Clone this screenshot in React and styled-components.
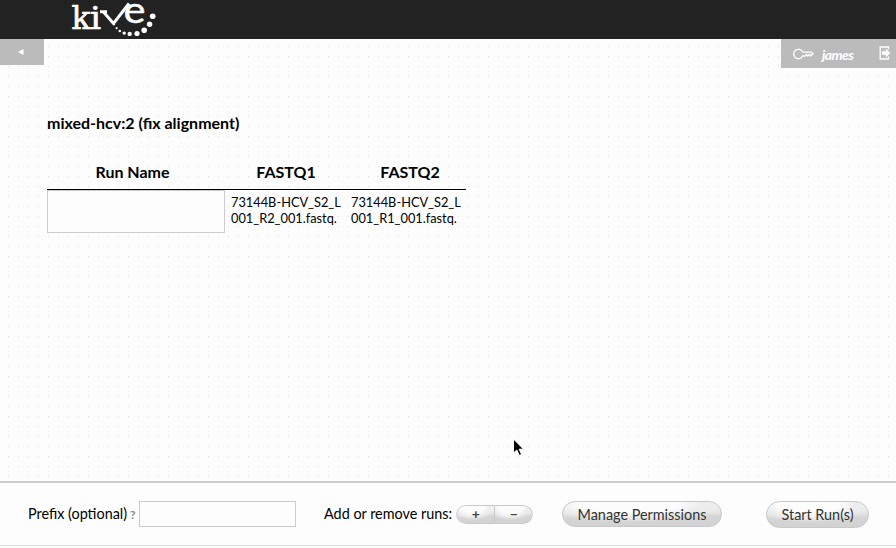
import React from 'react';
import styled, { createGlobalStyle, css } from 'styled-components';

const Global = createGlobalStyle`
  * { box-sizing: border-box; }
  body {
    margin: 0;
    overflow: hidden;
    background: #fdfdfd;
    color: #000;
    font: 14.4px/18px Lato, sans-serif;
  }
`;

const Page = styled.div`
  display: flex;
  flex-direction: column;
  height: 548px;
  background: conic-gradient(from 270deg at 1px 1px, #dedede 90deg, transparent 0) 8px 6px / 10px 10px #fdfdfd;
`;

const Header = styled.header`
  height: 39px;
  padding-left: 70px;
  background: #222;
`;

const Logo = styled.svg`
  display: block;
  overflow: visible;
  fill: #fff;
`;

const TopTabs = styled.nav`
  display: flex;
  justify-content: space-between;
  align-items: flex-start;
  height: 74px;
`;

const BackTab = styled.button`
  width: 44px;
  height: 26px;
  padding: 0 0 0 18px;
  border: 0;
  background: #bbb;
  svg { display: block; }
`;

const UserTab = styled.div`
  display: flex;
  align-items: center;
  width: 115px;
  height: 29px;
  padding-left: 12px;
  background: #bbb;
  color: #fff;
`;

const UserName = styled.span`
  width: 57px;
  margin-left: 8px;
  padding-top: 2px;
  font-size: 14px;
  font-weight: 700;
  font-style: italic;
  line-height: 27px;
  letter-spacing: -0.6px;
`;

const ExitIcon = styled.svg`
  margin-bottom: 2px;
`;

const Main = styled.main`
  flex: 1;
  padding-left: 47px;
`;

const Title = styled.h1`
  margin: 0;
  font-size: 16px;
  line-height: 20px;
`;

const RunTable = styled.div`
  display: grid;
  grid-template-columns: 178px 120px 121px;
  width: 419px;
  margin-top: 28px;
`;

const HeadCell = styled.div`
  height: 29px;
  padding-left: ${p => p.$left || 0}px;
  padding-right: ${p => p.$right || 0}px;
  border-bottom: 1px solid #000;
  text-align: center;
  font-size: 16px;
  font-weight: 700;
  line-height: 21px;
`;

const FileCell = styled.div`
  padding: 4px 0 0 6px;
  font-size: 12.8px;
  line-height: 16px;
  white-space: pre;
`;

const Field = styled.input`
  width: ${p => p.$w}px;
  height: ${p => p.$h}px;
  border: 1px solid #ccc;
  background: #fdfdfd;
  outline: 0;
`;

const Footer = styled.footer`
  display: flex;
  align-items: center;
  height: 65px;
  padding-left: 28px;
  border-top: 2px solid #ccc;
  border-bottom: 1px solid #ddd;
  background: #fdfdfd;
  margin-bottom: 2px;
  box-shadow: 0 2px #fdfdfd;
`;

const Label = styled.label`
  width: ${p => p.$w}px;
  white-space: nowrap;
`;

const Help = styled.span`
  width: 9px;
  color: #888;
  font-size: 12px;
  font-weight: 700;
  padding-top: 1px;
`;

const glossy = css`
  border: 1px solid #c9c9c9;
  background: radial-gradient(ellipse 62% 75% at 42% 8%, #fcfcfc 0 50%, #ececec 75%, transparent 100%),
    linear-gradient(#f7f7f7 0, #e8e8e8 40%, #d6d6d6 60%, #d2d2d2);
`;

const Button = styled.button`
  ${glossy}
  width: ${p => p.$w}px;
  height: ${p => p.$h}px;
  margin-left: ${p => p.$gap}px;
  margin-top: ${p => p.$drop || 0}px;
  padding: ${p => (p.$drop ? 0 : 2)}px 0 0;
  border-color: #c8c8c8;
  border-radius: 14px;
  color: #333;
  font: 14.4px/18px Lato, sans-serif;
`;

const Stepper = styled.div`
  display: flex;
  width: 77px;
  height: 19px;
  border-radius: 10px;
  overflow: hidden;
`;

const Step = styled.button`
  ${glossy}
  flex: ${p => (p.$last ? 38 : 39)};
  display: flex;
  align-items: center;
  justify-content: center;
  padding: 0 0 1px;
  border-radius: ${p => (p.$last ? '0 10px 10px 0' : '10px 0 0 10px')};
  ${p => p.$last && 'border-left: 0;'}
  color: #444;
  font: 700 14px/16px Lato, sans-serif;
`;

const Gap = styled.div`
  width: 28px;
`;

const Pointer = styled.svg`
  position: absolute;
  left: 512px;
  top: 437px;
`;

const logoDots = [
  [44.3, 24.5, 0.8], [46.6, 28.2, 1.1], [49.8, 31, 1.3], [54.2, 33.1, 1.7],
  [59.7, 33.9, 2.2], [67, 33.5, 2.6], [74.2, 30.3, 2.8], [79.6, 24.3, 2.7], [82.7, 16.2, 2.8],
];

const files = ['73144B-HCV_S2_L\n001_R2_001.fastq.', '73144B-HCV_S2_L\n001_R1_001.fastq.'];

function KiveLogo() {
  return (
    <Logo width="90" height="39" viewBox="0 0 90 39" aria-label="kive">
      <g fontFamily="DejaVu Serif" fontSize="32" stroke="#fff" strokeWidth="0.7">
        <text x="1.5" y="28.5" textLength="19" lengthAdjust="spacingAndGlyphs">k</text>
        <text x="20" y="28.5" textLength="11" lengthAdjust="spacingAndGlyphs">i</text>
      </g>
      <path d="M30 11.8h7M33.5 12l10 11.5L59 3.5" fill="none" stroke="#fff" strokeWidth="3" />
      <text x="53.5" y="23.3" fontFamily="Lato" fontSize="37" stroke="#fff" strokeWidth="0.4" textLength="22" lengthAdjust="spacingAndGlyphs">e</text>
      {logoDots.map(([x, y, r]) => <circle key={x} cx={x} cy={y} r={r} />)}
    </Logo>
  );
}

export default function App() {
  return (
    <>
      <Global />
      <Page>
        <Header><KiveLogo /></Header>
        <TopTabs>
          <BackTab aria-label="Back">
            <svg width="6" height="6" viewBox="0 0 6 6"><path d="M0 3L5.5 0v6z" fill="#fff" /></svg>
          </BackTab>
          <UserTab>
            <svg width="21" height="12" viewBox="0 0 21 12" fill="none" stroke="#fff" strokeWidth="1.3">
              <path d="M9.7 4A4.7 4.7 0 1 0 9.7 8h2.6l1.2-1.6L14.8 8l1.4-1.6L17.5 8l2.5-2-1.6-1.9H9.5" />
            </svg>
            <UserName>james</UserName>
            <ExitIcon width="13" height="14" viewBox="0 0 13 14">
              <path d="M9.5 3.5V1H1.2v12h8.3v-2.5" fill="none" stroke="#fff" strokeWidth="1.3" />
              <path d="M3 5.2h3.8V2.4L11.4 7l-4.6 4.6V8.8H3z" fill="#fff" />
            </ExitIcon>
          </UserTab>
        </TopTabs>
        <Main>
          <Title>mixed-hcv:2 (fix alignment)</Title>
          <RunTable>
            <HeadCell $right={7}>Run Name</HeadCell>
            <HeadCell $left={2}>FASTQ1</HeadCell>
            <HeadCell $left={9}>FASTQ2</HeadCell>
            <Field $w={178} $h={43} aria-label="Run Name" />
            {files.map(f => <FileCell key={f}>{f}</FileCell>)}
          </RunTable>
        </Main>
        <Footer>
          <Label $w={102}>Prefix (optional)</Label>
          <Help>?</Help>
          <Field $w={157} $h={26} aria-label="Prefix" />
          <Gap />
          <Label $w={132}>Add or remove runs:</Label>
          <Stepper>
            <Step>+</Step>
            <Step $last>−</Step>
          </Stepper>
          <Button $w={160} $h={26} $gap={29}>Manage Permissions</Button>
          <Button $w={103} $h={27} $gap={44} $drop={1}>Start Run(s)</Button>
        </Footer>
      </Page>
      <Pointer width="13" height="20" viewBox="0 0 13 20">
        <path d="M1.5 2v14l3.3-3 2.5 5.5 2.3-1-2.4-5.3h4.4z" fill="#000" stroke="#fff" strokeWidth="1" />
      </Pointer>
    </>
  );
}
